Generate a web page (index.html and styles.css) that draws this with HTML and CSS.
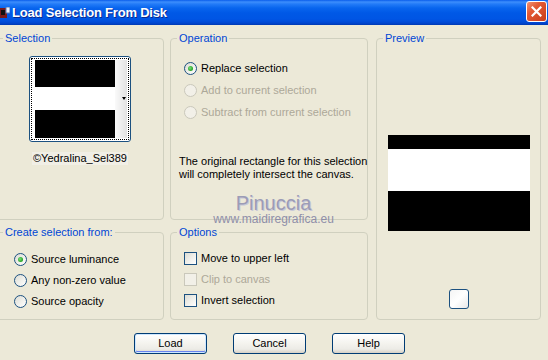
FILE: index.html
```html
<!DOCTYPE html>
<html lang="en">
  <head>
    <meta charset="UTF-8" />
    <title>Load Selection From Disk</title>
    <link rel="stylesheet" href="styles.css">
  </head>
  <body>
    <div class="window">
      <div class="titlebar">
        <span class="title-icon">
          <svg width="10" height="12" viewBox="0 0 10 12">
            <rect x="0" y="1" width="7" height="10" fill="#7a1a1a" />
            <rect x="1" y="3" width="4" height="5" fill="#111" />
            <rect x="6" y="0" width="4" height="6" fill="#e8f0ff" stroke="#5a7ab0" stroke-width="1" />
          </svg>
        </span>
        <span class="title">Load Selection From Disk</span>
        <span class="close">
          <svg width="11" height="11" viewBox="0 0 11 11">
            <path d="M1.5 1.5 L9.5 9.5 M9.5 1.5 L1.5 9.5" stroke="#fff" stroke-width="2.2" stroke-linecap="square" />
          </svg>
        </span>
      </div>

      <div class="dialog">
        <fieldset class="group left sel-group">
          <legend>Selection</legend>
          <div class="thumb">
            <div class="thumb-focus">
              <div class="thumb-img"></div>
              <div class="thumb-strip"><span class="arrow"></span></div>
            </div>
          </div>
          <div class="thumb-name">©Yedralina_Sel389</div>
        </fieldset>

        <fieldset class="group op-group">
          <legend>Operation</legend>
          <div class="choices op-choices">
            <div class="radio checked"><span class="mark"></span>Replace selection</div>
            <div class="radio disabled"><span class="mark"></span>Add to current selection</div>
            <div class="radio disabled"><span class="mark"></span>Subtract from current selection</div>
          </div>
          <p class="note">The original rectangle for this selection<br>will completely intersect the canvas.</p>
        </fieldset>

        <fieldset class="group preview-group">
          <legend>Preview</legend>
          <div class="preview-img"></div>
          <span class="preview-btn"></span>
        </fieldset>

        <fieldset class="group left create-group">
          <legend>Create selection from:</legend>
          <div class="choices">
            <div class="radio checked"><span class="mark"></span>Source luminance</div>
            <div class="radio"><span class="mark"></span>Any non-zero value</div>
            <div class="radio"><span class="mark"></span>Source opacity</div>
          </div>
        </fieldset>

        <fieldset class="group options-group">
          <legend>Options</legend>
          <div class="choices">
            <div class="check"><span class="mark"></span>Move to upper left</div>
            <div class="check disabled"><span class="mark"></span>Clip to canvas</div>
            <div class="check"><span class="mark"></span>Invert selection</div>
          </div>
        </fieldset>
      </div>

      <div class="buttons">
        <span class="btn default">Load</span>
        <span class="btn">Cancel</span>
        <span class="btn">Help</span>
      </div>

      <div class="watermark">
        <div class="wm-name">Pinuccia</div>
        <div class="wm-url">www.maidiregrafica.eu</div>
      </div>
    </div>
  </body>
</html>
```

FILE: styles.css
```css
body {
  margin: 0;
  font-family: "Liberation Sans", Arial, sans-serif;
  font-size: 11px;
  line-height: 13px;
  color: #000;
  background: #ece9d8;
}
.window {
  position: relative;
  width: 548px;
  height: 360px;
  overflow: hidden;
  background: #ece9d8;
}

/* title bar */
.titlebar {
  height: 25px;
  display: flex;
  align-items: center;
  background: linear-gradient(#0a5deb 0, #3d8efc 2px, #237bf8 4px, #0865ee 8px, #0058e6 13px, #0055e4 19px, #004bd8 22px, #0040c4 24px, #0039b0 25px);
}
.title-icon {
  width: 10px;
  height: 12px;
  margin-top: 1px;
}
.title {
  flex: 1;
  margin-left: 2px;
  color: #fff;
  font-weight: bold;
  font-size: 13px;
  letter-spacing: -0.2px;
  text-shadow: 1px 1px #0c2a8e;
}
.close {
  width: 19px;
  height: 19px;
  margin-right: 1px;
  margin-top: -2px;
  border: 1px solid #fff;
  border-radius: 3px;
  background: linear-gradient(135deg, #f09575 0, #e35a35 35%, #c83d1b 100%);
  display: flex;
  align-items: center;
  justify-content: center;
}

/* group boxes */
.dialog {
  display: grid;
  grid-template-columns: 164px 198px 167px;
  grid-template-rows: 188px 94px;
  column-gap: 6px;
  row-gap: 6px;
  padding-top: 7px;
}
.group {
  margin: 0;
  padding: 0;
  min-width: 0;
  border: 1px solid #d0d0bf;
  border-radius: 4px;
}
.group legend {
  margin-left: 6px;
  padding: 0 2px;
  color: #0046d5;
}
.left {
  margin-left: -4px;
}
.preview-group {
  grid-row: 1 / 3;
  grid-column: 3;
  margin-left: 2px;
  display: flex;
  flex-direction: column;
  align-items: center;
}

/* selection thumbnail */
.thumb {
  width: 100px;
  height: 84px;
  margin: 11px auto 0;
  border: 1px solid #1c5180;
  border-radius: 3px;
  background: #fff;
}
.thumb-focus {
  margin: 1px;
  height: 78px;
  border: 1px dotted #000;
  padding: 1px 1px 1px 3px;
  display: flex;
}
.thumb-img {
  width: 80px;
  height: 78px;
  background: linear-gradient(#000 0, #000 27px, #fff 27px, #fff 50px, #000 50px);
}
.thumb-strip {
  position: relative;
  width: 12px;
  height: 78px;
  background: linear-gradient(90deg, #fafafa, #e2e2e2);
}
.arrow {
  position: absolute;
  left: 7px;
  top: 37px;
  border-left: 2px solid transparent;
  border-right: 2px solid transparent;
  border-top: 3px solid #000;
}
.thumb-name {
  margin: 10px auto 0;
  width: max-content;
  padding: 0 1px;
  background: #f1efe6;
}

/* radios and checkboxes */
.choices {
  display: flex;
  flex-direction: column;
  gap: 9px;
  padding: 17px 0 0 13px;
}
.create-group .choices,
.options-group .choices {
  gap: 8px;
  padding-top: 13px;
}
.create-group .choices {
  padding-left: 17px;
  padding-top: 14px;
}
.radio,
.check {
  display: flex;
  align-items: center;
  height: 13px;
}
.mark {
  position: relative;
  width: 11px;
  height: 11px;
  margin-right: 4px;
  border: 1px solid #1c5180;
  background: linear-gradient(135deg, #dcdcd4 0, #f2f2ee 60%, #fff 100%);
  flex: none;
}
.radio .mark {
  border-radius: 50%;
}
.radio.checked .mark::after {
  content: "";
  position: absolute;
  left: 3px;
  top: 3px;
  width: 5px;
  height: 5px;
  border-radius: 50%;
  background: radial-gradient(circle at 40% 40%, #7ce07c 0, #21a121 70%);
}
.disabled {
  color: #aca899;
}
.disabled .mark {
  border-color: #cac8bb;
  background: #f2f0e8;
}
.note {
  margin: 36px 0 0 8px;
  white-space: nowrap;
}

/* preview */
.preview-img {
  width: 142px;
  height: 96px;
  margin-top: 90px;
  background: linear-gradient(#000 0, #000 14px, #fff 14px, #fff 56px, #000 56px);
}
.preview-btn {
  width: 18px;
  height: 18px;
  margin-top: 58px;
  border: 1px solid #1c5180;
  border-radius: 3px;
  background: linear-gradient(135deg, #f4f4f4, #fff 50%, #e8e8e8);
}

/* buttons */
.buttons {
  display: flex;
  gap: 26px;
  padding: 13px 0 0 134px;
}
.btn {
  width: 71px;
  height: 19px;
  border: 1px solid #003c74;
  border-radius: 3px;
  background: linear-gradient(#fff 0, #f4f3ee 50%, #ecebe6 80%, #d6d0c5 100%);
  display: flex;
  align-items: center;
  justify-content: center;
}
.btn.default {
  box-shadow: inset 0 0 0 1px #cee7ff, inset 0 -1px 0 1px #6982ee;
}

/* watermark over the dialog */
.watermark {
  position: absolute;
  left: 213px;
  top: 193px;
  width: 121px;
  text-align: center;
  color: #9c9cb6;
}
.wm-name {
  font-size: 20px;
  line-height: 20px;
  text-shadow: 1px 1px #c8c8d8;
}
.wm-url {
  font-size: 12px;
  line-height: 13px;
  color: #8e8ea8;
}
```
